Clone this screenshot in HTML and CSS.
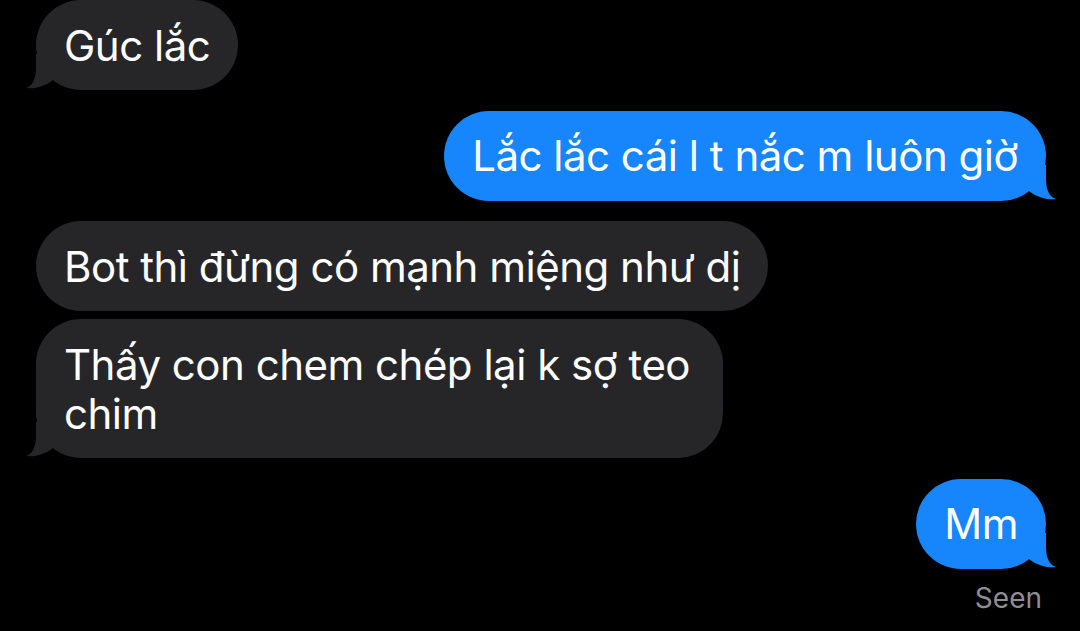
FILE: index.html
```html
<!DOCTYPE html>
<html lang="vi">
<head>
<meta charset="utf-8">
<title>Messages</title>
<link rel="stylesheet" href="styles.css">
</head>
<body>
<main class="thread">
  <div class="bubble in first">Gúc lắc<svg class="tail" viewBox="0 0 30 36" aria-hidden="true"><path d="M11 0 L11 14 C11 26 7 32 1 34 C9 35.5 21 32 28 26 L28 0 Z"/></svg></div>
  <div class="bubble out">Lắc lắc cái l t nắc m luôn giờ<svg class="tail" viewBox="0 0 30 36" aria-hidden="true"><path d="M11 0 L11 14 C11 26 7 32 1 34 C9 35.5 21 32 28 26 L28 0 Z"/></svg></div>
  <div class="bubble in">Bot thì đừng có mạnh miệng như dị</div>
  <div class="bubble in grouped narrow">Thấy con chem chép lại k sợ teo chim<svg class="tail" viewBox="0 0 30 36" aria-hidden="true"><path d="M11 0 L11 14 C11 26 7 32 1 34 C9 35.5 21 32 28 26 L28 0 Z"/></svg></div>
  <div class="bubble out">Mm<svg class="tail" viewBox="0 0 30 36" aria-hidden="true"><path d="M11 0 L11 14 C11 26 7 32 1 34 C9 35.5 21 32 28 26 L28 0 Z"/></svg></div>
  <div class="status">Seen</div>
</main>
</body>
</html>
```

FILE: styles.css
```css
html, body {
  margin: 0;
  padding: 0;
  background: #000;
  height: 100%;
  overflow: hidden;
}

.thread {
  display: flex;
  flex-direction: column;
  padding: 0 34px 0 36px;
  font-family: Inter, "Noto Sans", sans-serif;
}

.bubble {
  position: relative;
  box-sizing: border-box;
  max-width: 760px;
  padding: 20.5px 28px;
  border-radius: 45px;
  font-size: 42px;
  line-height: 49px;
  letter-spacing: -0.5px;
  color: #fff;
  margin-top: 20.5px;
}

.bubble.first {
  margin-top: 0;
}

.bubble.grouped {
  margin-top: 8px;
}

.bubble.narrow {
  max-width: 687px;
}

.bubble.in {
  align-self: flex-start;
  background: #262628;
}

.bubble.out {
  align-self: flex-end;
  background: #1785fc;
}

.tail {
  position: absolute;
  bottom: 0;
  width: 30px;
  height: 36px;
}

.bubble.in .tail {
  left: -11px;
  fill: #262628;
}

.bubble.out .tail {
  right: -11px;
  fill: #1785fc;
  transform: scaleX(-1);
}

.status {
  align-self: flex-end;
  margin-top: 12px;
  margin-right: 4px;
  font-size: 28px;
  line-height: 34px;
  color: #8e8e93;
}
```
